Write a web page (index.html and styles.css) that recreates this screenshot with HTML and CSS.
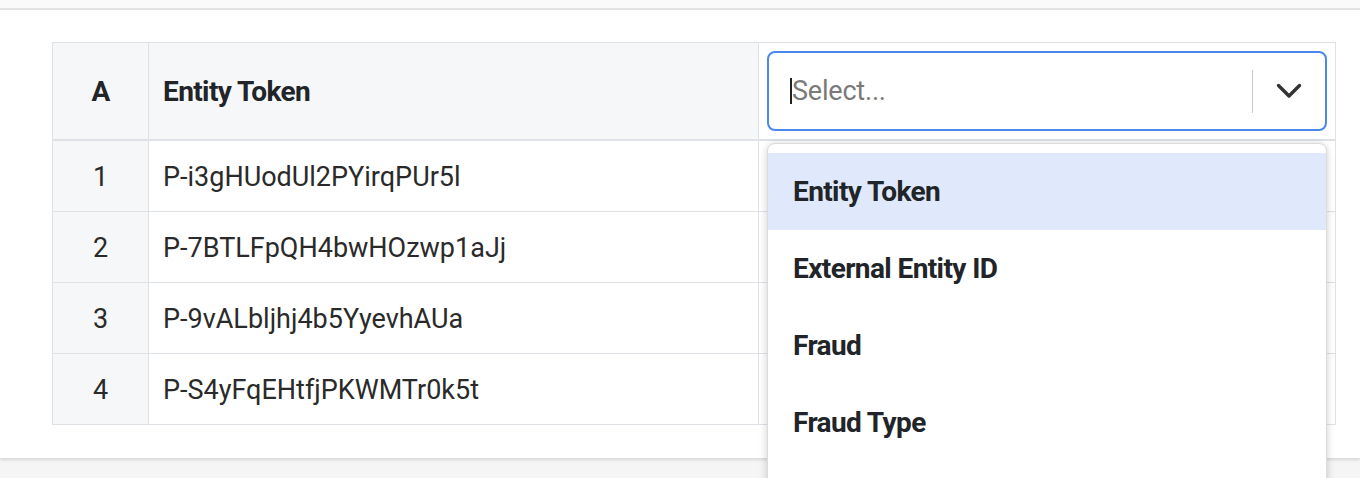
FILE: index.html
```html
<!DOCTYPE html>
<html lang="en">
<head>
<meta charset="utf-8">
<title>Entity table</title>
<link rel="stylesheet" href="styles.css">
</head>
<body>
<div class="topbar"></div>
<main class="card">
  <div class="table-wrap">
    <table class="grid">
      <colgroup>
        <col class="col-idx">
        <col class="col-main">
        <col class="col-sel">
      </colgroup>
      <thead>
        <tr>
          <th class="idx">A</th>
          <th class="name">Entity Token</th>
          <th class="sel-cell">
            <div class="select">
              <div class="select-value">
                <span class="caret"></span>
                <span class="placeholder">Select...</span>
              </div>
              <span class="separator"></span>
              <span class="indicator">
                <svg width="26" height="16" viewBox="0 0 26 16" aria-hidden="true">
                  <polyline points="2.5,2.5 13,13 23.5,2.5" fill="none" stroke="#333" stroke-width="3.4" stroke-linecap="round" stroke-linejoin="round"/>
                </svg>
              </span>
            </div>
          </th>
        </tr>
      </thead>
      <tbody>
        <tr><td class="idx">1</td><td>P-i3gHUodUl2PYirqPUr5l</td><td></td></tr>
        <tr><td class="idx">2</td><td>P-7BTLFpQH4bwHOzwp1aJj</td><td></td></tr>
        <tr><td class="idx">3</td><td>P-9vALbljhj4b5YyevhAUa</td><td></td></tr>
        <tr><td class="idx">4</td><td>P-S4yFqEHtfjPKWMTr0k5t</td><td></td></tr>
      </tbody>
    </table>
    <ul class="menu">
      <li class="option active">Entity Token</li>
      <li class="option">External Entity ID</li>
      <li class="option">Fraud</li>
      <li class="option">Fraud Type</li>
    </ul>
  </div>
</main>
</body>
</html>
```

FILE: styles.css
```css
html, body {
  margin: 0;
  padding: 0;
  height: 478px;
  overflow: hidden;
}

body {
  background: #f5f5f5;
  font-family: Roboto, "Liberation Sans", Arial, sans-serif;
  color: #212529;
}

.topbar {
  height: 8px;
  background: #fafafa;
  border-bottom: 2px solid #e3e3e3;
}

.card {
  background: #fff;
  height: 448px;
  box-sizing: border-box;
  padding: 32px 24px 0 52px;
  box-shadow: 0 2px 3px rgba(0, 0, 0, 0.12);
}

.table-wrap {
  position: relative;
}

.grid {
  width: 100%;
  border-collapse: collapse;
  table-layout: fixed;
  font-size: 27px;
}

.col-idx { width: 96px; }
.col-main { width: 610px; }

.grid th,
.grid td {
  border: 1px solid #dee1e6;
  text-align: left;
  padding: 0 14px;
}

.grid thead tr {
  height: 97px;
}

.grid thead th {
  background: #f6f7f9;
  font-size: 28px;
  font-weight: 700;
  border-bottom: 2px solid #dee1e6;
  letter-spacing: -0.6px;
}

.grid tbody tr {
  height: 71px;
}

.grid tbody td {
  color: #2a2a2a;
  padding-top: 3px;
}

.grid .idx {
  text-align: center;
  background: #f6f7f9;
  padding: 0;
}

.grid tbody td.idx {
  padding-top: 3px;
}

.grid th.sel-cell {
  background: #fff;
  padding: 8px 8px 8px 8px;
}

.select {
  height: 80px;
  box-sizing: border-box;
  border: 2px solid #4a88ee;
  border-radius: 8px;
  display: flex;
  align-items: center;
  background: #fff;
}

.select-value {
  flex: 1;
  display: flex;
  align-items: center;
  padding-left: 21px;
}

.caret {
  width: 2px;
  height: 26px;
  background: #222;
}

.placeholder {
  font-size: 27px;
  font-weight: 400;
  color: #7a7a7a;
  letter-spacing: -0.2px;
}

.separator {
  width: 1px;
  height: 43px;
  background: #cccccc;
}

.indicator {
  width: 72px;
  display: flex;
  justify-content: center;
  align-items: center;
}

.menu {
  position: absolute;
  left: 715px;
  top: 101px;
  width: 560px;
  height: 420px;
  margin: 0;
  padding: 9px 0 0 0;
  list-style: none;
  box-sizing: border-box;
  background: #fff;
  border: 1px solid #dcdcdc;
  border-radius: 8px;
  box-shadow: 0 0 6px rgba(0, 0, 0, 0.12), 0 4px 11px rgba(0, 0, 0, 0.08);
}

.option {
  height: 77px;
  display: flex;
  align-items: center;
  padding-left: 25px;
  font-size: 28px;
  font-weight: 700;
  letter-spacing: -0.6px;
  color: #212529;
}

.option.active {
  background: #dfe9fb;
}
```
